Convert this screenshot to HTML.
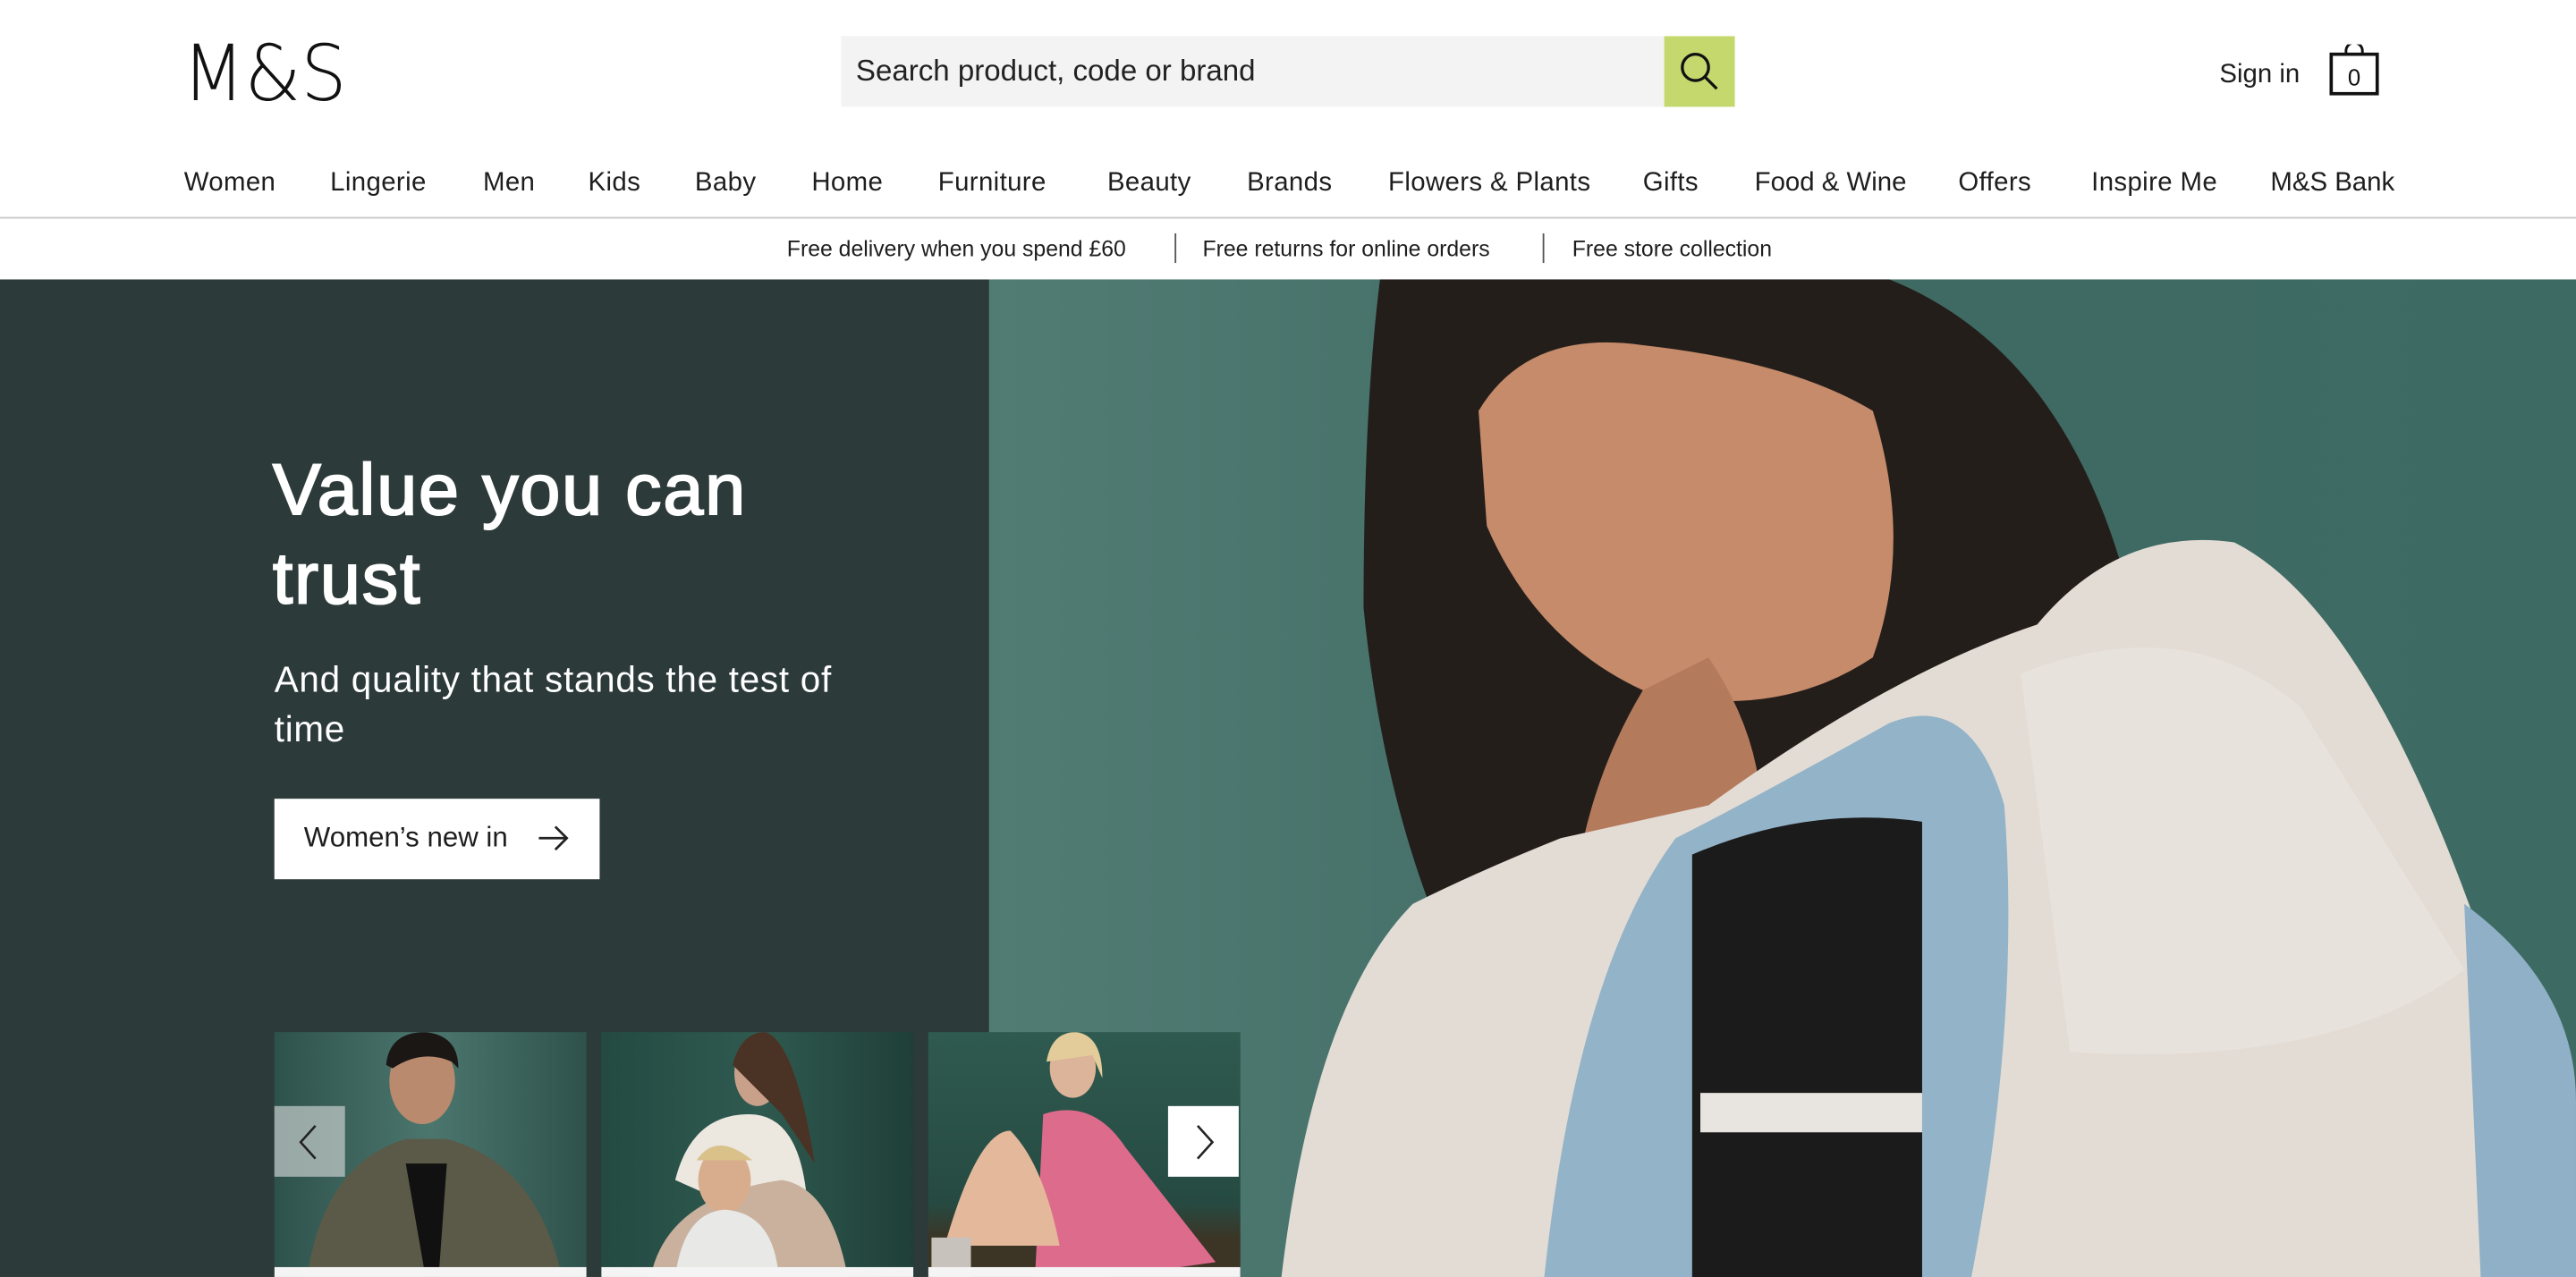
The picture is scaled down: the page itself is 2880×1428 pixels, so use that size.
<!DOCTYPE html>
<html><head><meta charset="utf-8"><style>
*{margin:0;padding:0;box-sizing:border-box}
html,body{width:2880px;height:1428px;overflow:hidden;background:#fff}
#w{position:absolute;left:0;top:0;width:1568px;height:777px;transform:scale(1.83673,1.8378);transform-origin:0 0;font-family:"Liberation Sans",sans-serif;color:#1e1e1e}
.a{position:absolute;white-space:nowrap}
.nav{top:103px;font-size:16px;letter-spacing:.2px}
.promo{top:144px;font-size:13.5px}
.card{position:absolute;top:628px;width:190px;height:149px;overflow:hidden}
.cap{position:absolute;left:0;bottom:0;width:100%;height:6px;background:#f4f4f4}
</style></head><body><div id="w">
<svg class="a" style="left:110px;top:22px" width="104" height="44"><text x="1" y="39" font-size="47" font-family="DejaVu Sans" font-weight="200" fill="#fff" stroke="#111" stroke-width="0" textLength="100" lengthAdjust="spacingAndGlyphs" style="fill:#111;font-weight:200">M&amp;S</text></svg>
<div class="a" style="left:512px;top:22px;width:501px;height:43px;background:#f3f3f3"></div>
<div class="a" style="left:521px;top:33px;font-size:18px;color:#222">Search product, code or brand</div>
<div class="a" style="left:1013px;top:22px;width:43px;height:43px;background:#c5d86d"></div>
<svg class="a" style="left:1020px;top:29px" width="29" height="29" viewBox="0 0 29 29"><circle cx="12" cy="12" r="8" fill="none" stroke="#111" stroke-width="1.8"/><path d="M18 18l7 7" stroke="#111" stroke-width="1.8"/></svg>
<div class="a" style="left:1351px;top:37px;font-size:16px">Sign in</div>
<svg class="a" style="left:1417px;top:27px" width="32" height="32" viewBox="0 0 32 32"><rect x="2" y="6" width="28" height="24" fill="none" stroke="#111" stroke-width="2"/><path d="M11 6V4a5 5 0 0 1 10 0v2" fill="none" stroke="#111" stroke-width="1.6"/><text x="16" y="25" font-size="14" text-anchor="middle" font-family="Liberation Sans" fill="#111">0</text></svg>
<div class="a nav" style="left:112px">Women</div>
<div class="a nav" style="left:201px">Lingerie</div>
<div class="a nav" style="left:294px">Men</div>
<div class="a nav" style="left:358px">Kids</div>
<div class="a nav" style="left:423px">Baby</div>
<div class="a nav" style="left:494px">Home</div>
<div class="a nav" style="left:571px">Furniture</div>
<div class="a nav" style="left:674px">Beauty</div>
<div class="a nav" style="left:759px">Brands</div>
<div class="a nav" style="left:845px">Flowers &amp; Plants</div>
<div class="a nav" style="left:1000px">Gifts</div>
<div class="a nav" style="left:1068px;letter-spacing:0">Food &amp; Wine</div>
<div class="a nav" style="left:1192px">Offers</div>
<div class="a nav" style="left:1273px">Inspire Me</div>
<div class="a nav" style="left:1382px;letter-spacing:0">M&amp;S Bank</div>
<div class="a" style="left:0;top:132px;width:1568px;height:1px;background:#c8c8c8"></div>
<div class="a promo" style="left:479px">Free delivery when you spend £60</div>
<div class="a" style="left:715px;top:142px;width:1px;height:18px;background:#555"></div>
<div class="a promo" style="left:732px">Free returns for online orders</div>
<div class="a" style="left:939px;top:142px;width:1px;height:18px;background:#555"></div>
<div class="a promo" style="left:957px">Free store collection</div>
<svg class="a" style="left:0;top:170px" width="1568" height="607" viewBox="0 0 1568 607">
<defs><linearGradient id="bg" x1="0" x2="1"><stop offset="0" stop-color="#517c74"/><stop offset=".5" stop-color="#3f6a63"/><stop offset="1" stop-color="#3d6b63"/></linearGradient></defs>
<rect x="0" y="0" width="1568" height="607" fill="#2c3a39"/>
<rect x="602" y="0" width="966" height="607" fill="url(#bg)"/>
<path d="M840 0H1150Q1250 40 1290 170Q1310 280 1280 330Q1250 340 1200 330Q1100 360 1000 380Q920 390 870 380Q840 300 830 200Q830 80 840 0Z" fill="#241e1b"/>
<path d="M900 80Q930 30 1000 40Q1090 50 1140 80Q1165 160 1140 230Q1080 270 1000 250Q935 220 905 150Z" fill="#c58b6a"/>
<path d="M1040 230Q1080 290 1070 350L960 360Q970 300 1000 250Z" fill="#b47a5c"/>
<path d="M780 607Q800 440 860 380Q900 360 950 340L1040 320Q1150 240 1240 210Q1290 150 1360 160Q1440 200 1510 400Q1530 500 1568 560V607Z" fill="#e3dcd5"/>
<path d="M940 607Q960 420 1020 340Q1060 320 1150 270Q1200 250 1220 320Q1230 450 1200 607Z" fill="#93b3c8"/>
<path d="M1030 607V350Q1100 320 1170 330V607Z" fill="#1b1b1b"/>
<rect x="1035" y="495" width="135" height="24" fill="#e8e4e0"/>
<path d="M1500 380Q1568 430 1568 500V607H1510Z" fill="#8fb0c6"/>
<path d="M1230 240Q1330 200 1400 260L1500 420Q1420 480 1260 470Z" fill="#e8e2dc"/>
</svg>
<div class="a" style="left:166px;top:272px;font-size:44px;font-weight:normal;-webkit-text-stroke:1.1px #fff;color:#fff;line-height:54px;letter-spacing:1px">Value you can<br>trust</div>
<div class="a" style="left:167px;top:399px;font-size:22px;color:#fff;line-height:30px;letter-spacing:.4px">And quality that stands the test of<br>time</div>
<div class="a" style="left:167px;top:486px;width:198px;height:49px;background:#fff"></div>
<div class="a" style="left:185px;top:500px;font-size:17px">Women’s new in</div>
<svg class="a" style="left:327px;top:500px" width="20" height="20" viewBox="0 0 20 20"><path d="M1 10h17M11 3l7 7-7 7" fill="none" stroke="#222" stroke-width="1.5"/></svg>
<div class="card" style="left:167px;background:linear-gradient(90deg,#2e524b,#4b766e 50%,#2e524b)">
<svg width="190" height="149"><ellipse cx="90" cy="30" rx="20" ry="26" fill="#b98a6e"/><path d="M68 20Q70 0 92 0Q112 2 112 22L108 18Q90 10 72 22Z" fill="#1b1715"/><path d="M20 149Q30 80 80 65H105Q160 80 175 149Z" fill="#5b5a48"/><path d="M80 80L92 149H100L105 80Z" fill="#111"/></svg><div class="cap"></div></div>
<div class="card" style="left:366px;background:linear-gradient(90deg,#244a42,#2f5a50 50%,#1f3f38)">
<svg width="190" height="149"><ellipse cx="95" cy="25" rx="14" ry="20" fill="#c9a08a"/><path d="M80 20Q85 0 100 0Q118 6 130 80L110 50Z" fill="#4a3324"/><path d="M45 90Q55 50 90 50Q120 50 125 100L90 110Z" fill="#ece7df"/><path d="M30 149Q40 100 110 90Q140 95 150 149Z" fill="#c9b19e"/><ellipse cx="75" cy="90" rx="16" ry="20" fill="#d8ad8e"/><path d="M58 78Q70 60 92 78Z" fill="#d9c18a"/><path d="M45 149Q50 110 75 108Q105 110 108 149Z" fill="#e8e8e6"/></svg><div class="cap"></div></div>
<div class="card" style="left:565px;background:linear-gradient(180deg,#2f5a50,#264a42 70%,#3c3424 85%)">
<svg width="190" height="149"><ellipse cx="88" cy="22" rx="14" ry="18" fill="#dbb49a"/><path d="M72 18Q75 0 90 0Q106 2 106 28L100 14Z" fill="#e3cc9a"/><path d="M70 50Q100 40 120 70L175 140L110 149H65Z" fill="#dd6b8c"/><path d="M10 130Q30 60 50 60Q70 80 80 130Z" fill="#e4b89a"/><rect x="2" y="125" width="24" height="24" fill="#c8c2bc"/></svg><div class="cap"></div></div>
<div class="a" style="left:167px;top:673px;width:43px;height:43px;background:rgba(210,215,214,.65)"></div>
<svg class="a" style="left:178px;top:683px" width="20" height="24"><path d="M14 2L5 12l9 10" fill="none" stroke="#222" stroke-width="1.4"/></svg>
<div class="a" style="left:711px;top:673px;width:43px;height:43px;background:#fff"></div>
<svg class="a" style="left:724px;top:683px" width="20" height="24"><path d="M5 2l9 10-9 10" fill="none" stroke="#222" stroke-width="1.4"/></svg>
</div></body></html>
